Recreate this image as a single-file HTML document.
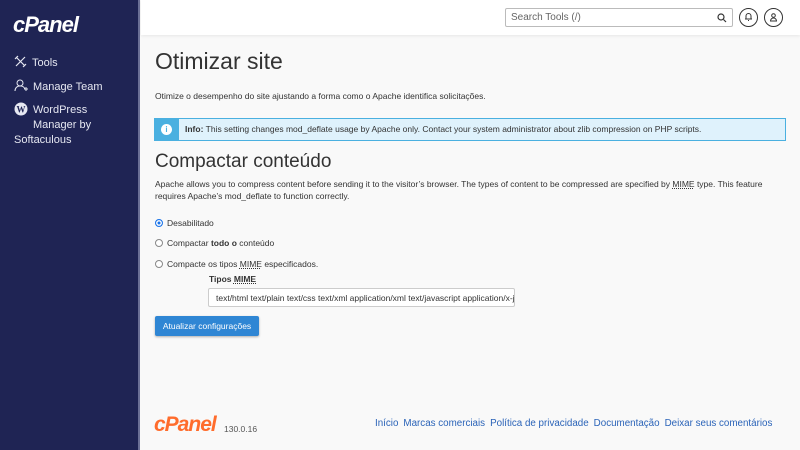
<!DOCTYPE html>
<html><head><meta charset="utf-8"><style>
*{box-sizing:border-box;margin:0;padding:0}
body{width:800px;height:450px;overflow:hidden;font-family:"Liberation Sans",sans-serif;background:#f9f9f9;position:relative;color:#333}
.sb{position:absolute;left:0;top:0;width:140px;height:450px;background:#1f2454;border-right:2px solid #6b7096}
.logo{position:absolute;left:13px;top:12px;color:#fff;font-weight:bold;font-style:italic;font-size:22px;letter-spacing:-1px}
.nav{position:absolute;left:14px;color:#e6e8f2;font-size:11px;line-height:15px}
.top{position:absolute;left:141px;top:0;right:0;height:35px;background:#fff;box-shadow:0 1px 3px rgba(0,0,0,.08)}
.search{position:absolute;left:505px;top:8px;width:228px;height:19px;border:1px solid #bbb;border-radius:2px;background:#fff;font-size:10px;color:#666;padding:3px 5px}
.circ{position:absolute;top:8px;width:19px;height:19px;border:1px solid #333;border-radius:50%}
h1{position:absolute;left:155px;top:48px;font-weight:normal;font-size:23px;color:#333}
.p{position:absolute;left:155px;font-size:8.5px;color:#333;line-height:12px}
.info{position:absolute;left:154px;top:118px;width:632px;height:23px;background:#dff2fc;border:1px solid #4ab0e0}
.info .ic{position:absolute;left:0;top:0;width:24px;height:21px;background:#4ab0e0}
.info .ic span{position:absolute;left:6px;top:5px;width:11px;height:11px;border-radius:50%;background:#fff;color:#4ab0e0;font-size:8px;font-weight:bold;text-align:center;line-height:11px}
.info .t{position:absolute;left:30px;top:5px;font-size:8.5px;color:#333}
h2{position:absolute;left:155px;top:151px;font-weight:normal;font-size:19px;color:#333}
.r{position:absolute;left:155px;font-size:8.5px;color:#333}
.r i{display:inline-block;width:8px;height:8px;border:1px solid #888;border-radius:50%;vertical-align:-1px;margin-right:4px;background:#fff}
.r i.on{border-color:#1a73e8;box-shadow:inset 0 0 0 1.5px #fff;background:#1a73e8}
u{text-decoration:underline dotted}
.inp{position:absolute;left:208px;top:288px;width:307px;height:19px;border:1px solid #ccc;border-radius:2px;background:#fff;font-size:8.5px;padding:4px 7px;white-space:nowrap;overflow:hidden;color:#333}
.btn{position:absolute;left:155px;top:316px;width:104px;height:20px;background:#2f86d4;color:#fff;font-size:8.5px;text-align:center;line-height:20px;border-radius:2px;box-shadow:0 1px 2px rgba(0,0,0,.3)}
.flogo{position:absolute;left:154px;top:413px;color:#ff6c2c;font-weight:bold;font-style:italic;font-size:21px;letter-spacing:-1px}
.ver{position:absolute;left:224px;top:424px;font-size:8.5px;color:#555}
.links{position:absolute;left:375px;top:418px;font-size:9.8px;color:#2a63b8;white-space:nowrap}
.links span{margin-right:5px}
</style></head><body>
<div class="sb">
 <div class="logo">cPanel</div>
 <div class="nav" style="top:55px"><svg width="13" height="13" viewBox="0 0 13 13" style="vertical-align:-2px;margin-right:5px"><path d="M2 2l9 9M11 2L2 11M1 4l3-3M9 12l3-3" stroke="#e6e8f2" stroke-width="1.2" fill="none"/></svg>Tools</div>
 <div class="nav" style="top:79px"><svg width="14" height="13" viewBox="0 0 14 13" style="vertical-align:-2px;margin-right:5px"><circle cx="6" cy="4" r="3" stroke="#e6e8f2" fill="none"/><path d="M1 12c0-3 2-5 5-5s4 1 5 3M10 10h4M12 8v4" stroke="#e6e8f2" fill="none"/></svg>Manage Team</div>
 <div class="nav" style="top:102px"><svg width="14" height="14" viewBox="0 0 14 14" style="vertical-align:-3px;margin-right:5px"><circle cx="7" cy="7" r="6.5" fill="#e6e8f2"/><text x="7" y="10.5" font-size="9" font-weight="bold" text-anchor="middle" fill="#1f2454" font-family="Liberation Serif">W</text></svg>WordPress<br><span style="padding-left:19px">Manager by</span><br>Softaculous</div>
</div>
<div class="top"></div>
<div class="search">Search Tools (/)<svg width="10" height="10" viewBox="0 0 10 10" style="position:absolute;right:5px;top:4px"><circle cx="4" cy="4" r="3" stroke="#333" fill="none" stroke-width="1.2"/><path d="M6.5 6.5l2.5 2.5" stroke="#333" stroke-width="1.2"/></svg></div>
<div class="circ" style="left:739px"><svg width="17" height="17" viewBox="0 0 17 17"><path d="M6 10V7a2.5 2.5 0 015 0v3zM5 10h7M8 11.5h1" stroke="#333" fill="none"/></svg></div>
<div class="circ" style="left:764px"><svg width="17" height="17" viewBox="0 0 17 17"><circle cx="8.5" cy="6.5" r="1.8" stroke="#333" fill="none"/><path d="M5.5 12a3 3 0 016 0z" stroke="#333" fill="none"/></svg></div>
<h1>Otimizar site</h1>
<div class="p" style="top:90px">Otimize o desempenho do site ajustando a forma como o Apache identifica solicitações.</div>
<div class="info"><div class="ic"><span>i</span></div><div class="t"><b>Info:</b> This setting changes mod_deflate usage by Apache only. Contact your system administrator about zlib compression on PHP scripts.</div></div>
<h2>Compactar conteúdo</h2>
<div class="p" style="top:178px">Apache allows you to compress content before sending it to the visitor’s browser. The types of content to be compressed are specified by <u>MIME</u> type. This feature<br>requires Apache’s mod_deflate to function correctly.</div>
<div class="r" style="top:218px"><i class="on"></i>Desabilitado</div>
<div class="r" style="top:238px"><i></i>Compactar <b>todo o</b> conteúdo</div>
<div class="r" style="top:259px"><i></i>Compacte os tipos <u>MIME</u> especificados.</div>
<div class="r" style="left:209px;top:274px"><b>Tipos <u>MIME</u></b></div>
<div class="inp">text/html text/plain text/css text/xml application/xml text/javascript application/x-javascript</div>
<div class="btn">Atualizar configurações</div>
<div class="flogo">cPanel</div>
<div class="ver">130.0.16</div>
<div class="links"><span>Início</span><span>Marcas comerciais</span><span>Política de privacidade</span><span>Documentação</span><span>Deixar seus comentários</span></div>
</body></html>
